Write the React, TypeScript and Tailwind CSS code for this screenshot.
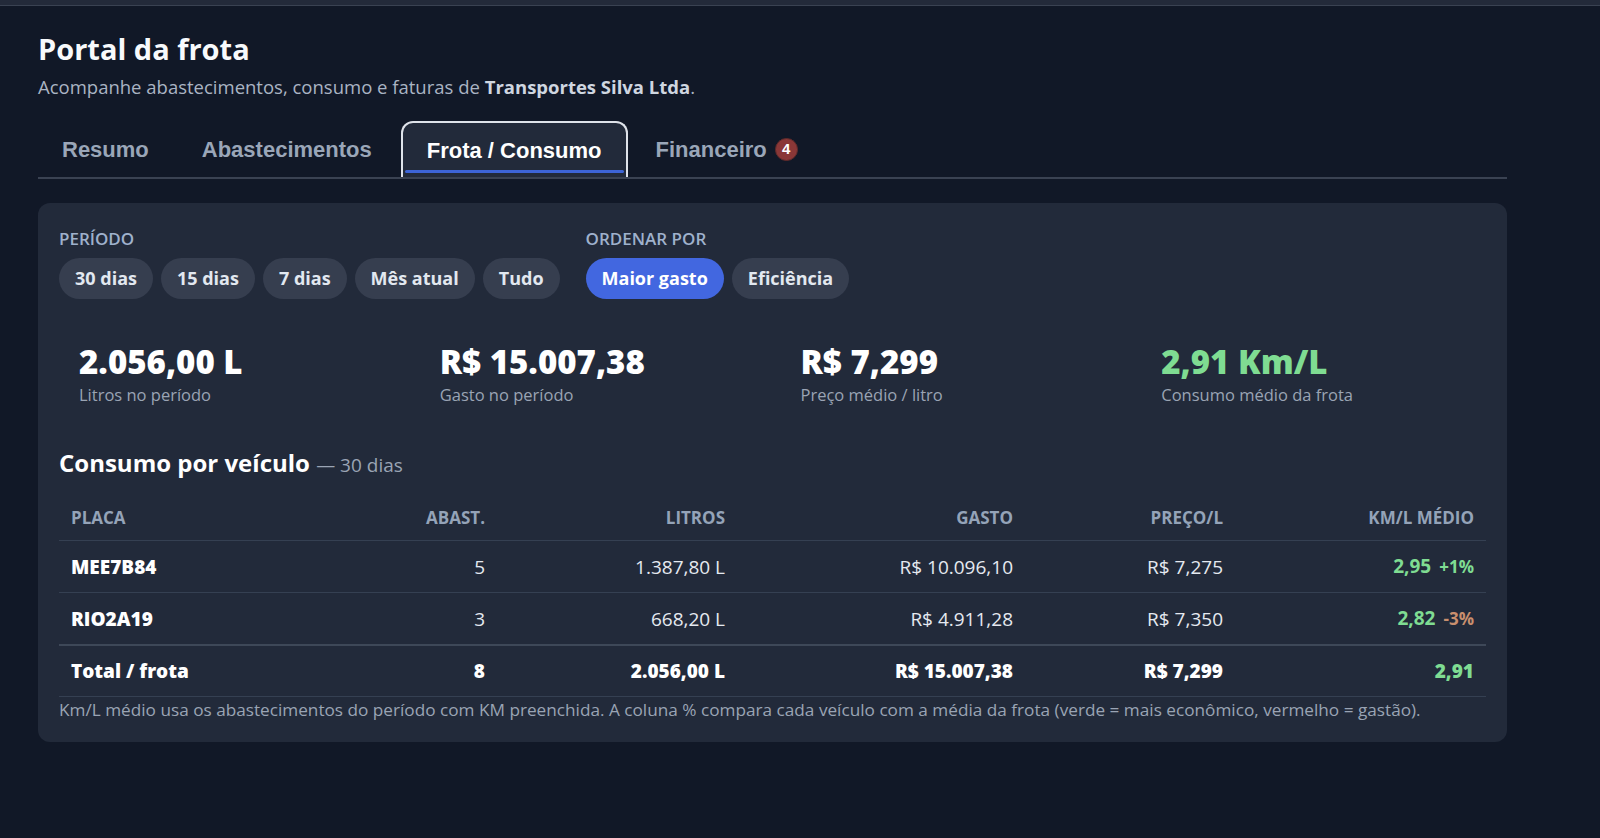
import React from "react";

type Row = {
  placa: string;
  abast: number;
  litros: string;
  gasto: string;
  preco: string;
  kml: string;
  diff: string;
  good: boolean;
};

const rows: Row[] = [
  { placa: "MEE7B84", abast: 5, litros: "1.387,80 L", gasto: "R$ 10.096,10", preco: "R$ 7,275", kml: "2,95", diff: "+1%", good: true },
  { placa: "RIO2A19", abast: 3, litros: "668,20 L", gasto: "R$ 4.911,28", preco: "R$ 7,350", kml: "2,82", diff: "-3%", good: false },
];

const periodos = ["30 dias", "15 dias", "7 dias", "Mês atual", "Tudo"];

const stats = [
  { value: "2.056,00 L", label: "Litros no período", green: false },
  { value: "R$ 15.007,38", label: "Gasto no período", green: false },
  { value: "R$ 7,299", label: "Preço médio / litro", green: false },
  { value: "2,91 Km/L", label: "Consumo médio da frota", green: true },
];

const Chip = ({ label, active }: { label: string; active?: boolean }) => (
  <button
    className={
      "h-[41px] px-4 rounded-full text-[18px] font-bold " +
      (active ? "bg-[#4267e0] text-white" : "bg-[#363e4f] text-[#e2e8f0]")
    }
  >
    {label}
  </button>
);

const App = () => {
  return (
    <div className="min-h-screen bg-[#111827] font-['Open_Sans','Noto_Sans',sans-serif] text-white">
      <div className="h-[6px] bg-[#232a3a] border-b border-[#3a4252]" />
      <div className="pl-[38px] pt-[26px]">
        <div className="w-[1469px]">
          <h1 className="text-[29px] leading-[34px] font-bold text-[#f8fafc]">Portal da frota</h1>
          <p className="mt-[8px] text-[18.5px] leading-[26px] text-[#aab4c3]">
            Acompanhe abastecimentos, consumo e faturas de{" "}
            <span className="font-bold text-[#cfd6e0]">Transportes Silva Ltda</span>.
          </p>

          {/* tabs */}
          <div className="mt-[21px] flex items-end gap-[5px] border-b-2 border-[#3a4252] font-['Liberation_Sans',Arial,sans-serif]">
            <button className="h-[56px] px-6 text-[22px] font-bold text-[#9aa6b8]">Resumo</button>
            <button className="h-[56px] px-6 text-[22px] font-bold text-[#9aa6b8]">Abastecimentos</button>
            <button className="relative h-[56px] px-[24px] text-[22px] font-bold text-white bg-[#222a3a] border-2 border-b-0 border-[#dfe3ea] rounded-t-xl">
              Frota / Consumo
              <span className="absolute left-[2px] right-[2px] bottom-[4px] h-[3px] bg-[#3d64d6] rounded-full" />
            </button>
            <button className="h-[56px] pl-[23px] pr-6 text-[22px] font-bold text-[#9aa6b8] flex items-center">
              Financeiro
              <span className="ml-2 w-[23px] h-[23px] rounded-full bg-[#8a3737] border border-[#5e2a2a] text-white text-[15px] leading-[20px] font-bold flex items-center justify-center">
                4
              </span>
            </button>
          </div>

          {/* card */}
          <div className="mt-[24px] rounded-xl bg-[#222a3a] px-[21px] pt-[25px] pb-[20px]">
            <div className="flex gap-[26px]">
              <div>
                <div className="text-[17px] leading-[22px] font-semibold uppercase text-[#9fb1cc]">Período</div>
                <div className="mt-[8px] flex gap-[8px]">
                  {periodos.map((p) => (
                    <Chip key={p} label={p} />
                  ))}
                </div>
              </div>
              <div>
                <div className="text-[17px] leading-[22px] font-semibold uppercase text-[#9fb1cc]">Ordenar por</div>
                <div className="mt-[8px] flex gap-[8px]">
                  <Chip label="Maior gasto" active />
                  <Chip label="Eficiência" />
                </div>
              </div>
            </div>

            <div className="mt-[29px] grid grid-cols-4 gap-4">
              {stats.map((s) => (
                <div key={s.label} className="p-5 pt-[16px]">
                  <div
                    className={
                      "text-[33px] leading-[36px] font-extrabold " +
                      (s.green ? "text-[#7fdc92]" : "text-white")
                    }
                  >
                    {s.value}
                  </div>
                  <div className="mt-[3px] text-[16.5px] leading-[24px] text-[#9aa4b4]">{s.label}</div>
                </div>
              ))}
            </div>

            <h2 className="mt-[21px] text-[24px] leading-[30px] font-bold text-white">
              Consumo por veículo{" "}
              <span className="text-[19px] font-normal text-[#9aa4b4]">— 30 dias</span>
            </h2>

            <table className="mt-[15px] w-full table-fixed border-collapse">
              <colgroup>
                <col className="w-[259px]" />
                <col className="w-[179px]" />
                <col className="w-[240px]" />
                <col className="w-[288px]" />
                <col className="w-[210px]" />
                <col className="w-[251px]" />
              </colgroup>
              <thead>
                <tr className="text-[17px] leading-[21px] font-bold uppercase text-[#94a3b8]">
                  <th className="px-3 py-3 text-left font-bold">Placa</th>
                  <th className="px-3 py-3 text-right font-bold">Abast.</th>
                  <th className="px-3 py-3 text-right font-bold">Litros</th>
                  <th className="px-3 py-3 text-right font-bold">Gasto</th>
                  <th className="px-3 py-3 text-right font-bold">Preço/L</th>
                  <th className="px-3 py-3 text-right font-bold">Km/L médio</th>
                </tr>
              </thead>
              <tbody className="text-[19px] leading-[24px] text-[#e5e9f0]">
                {rows.map((r) => (
                  <tr key={r.placa} className="border-t border-[#354052]">
                    <td className="px-3 py-[13px] font-extrabold text-white">{r.placa}</td>
                    <td className="px-3 py-[13px] text-right">{r.abast}</td>
                    <td className="px-3 py-[13px] text-right">{r.litros}</td>
                    <td className="px-3 py-[13px] text-right">{r.gasto}</td>
                    <td className="px-3 py-[13px] text-right">{r.preco}</td>
                    <td className="px-3 py-[13px] text-right">
                      <span className="font-bold text-[#7fdc92]">{r.kml}</span>
                      <span
                        className={
                          "ml-2 text-[17px] font-bold " +
                          (r.good ? "text-[#7fdc92]" : "text-[#c98f6e]")
                        }
                      >
                        {r.diff}
                      </span>
                    </td>
                  </tr>
                ))}
                <tr className="border-t-2 border-b border-t-[#3e4858] border-b-[#354052] font-extrabold text-white">
                  <td className="px-3 py-[13px]">Total / frota</td>
                  <td className="px-3 py-[13px] text-right">8</td>
                  <td className="px-3 py-[13px] text-right">2.056,00 L</td>
                  <td className="px-3 py-[13px] text-right">R$ 15.007,38</td>
                  <td className="px-3 py-[13px] text-right">R$ 7,299</td>
                  <td className="px-3 py-[13px] text-right text-[#7fdc92]">2,91</td>
                </tr>
              </tbody>
            </table>
            <p className="mt-[1px] text-[17.2px] leading-[24px] text-[#9aa4b4]">
              Km/L médio usa os abastecimentos do período com KM preenchida. A coluna % compara cada veículo com a
              média da frota (verde = mais econômico, vermelho = gastão).
            </p>
          </div>
        </div>
      </div>
    </div>
  );
};

export default App;
